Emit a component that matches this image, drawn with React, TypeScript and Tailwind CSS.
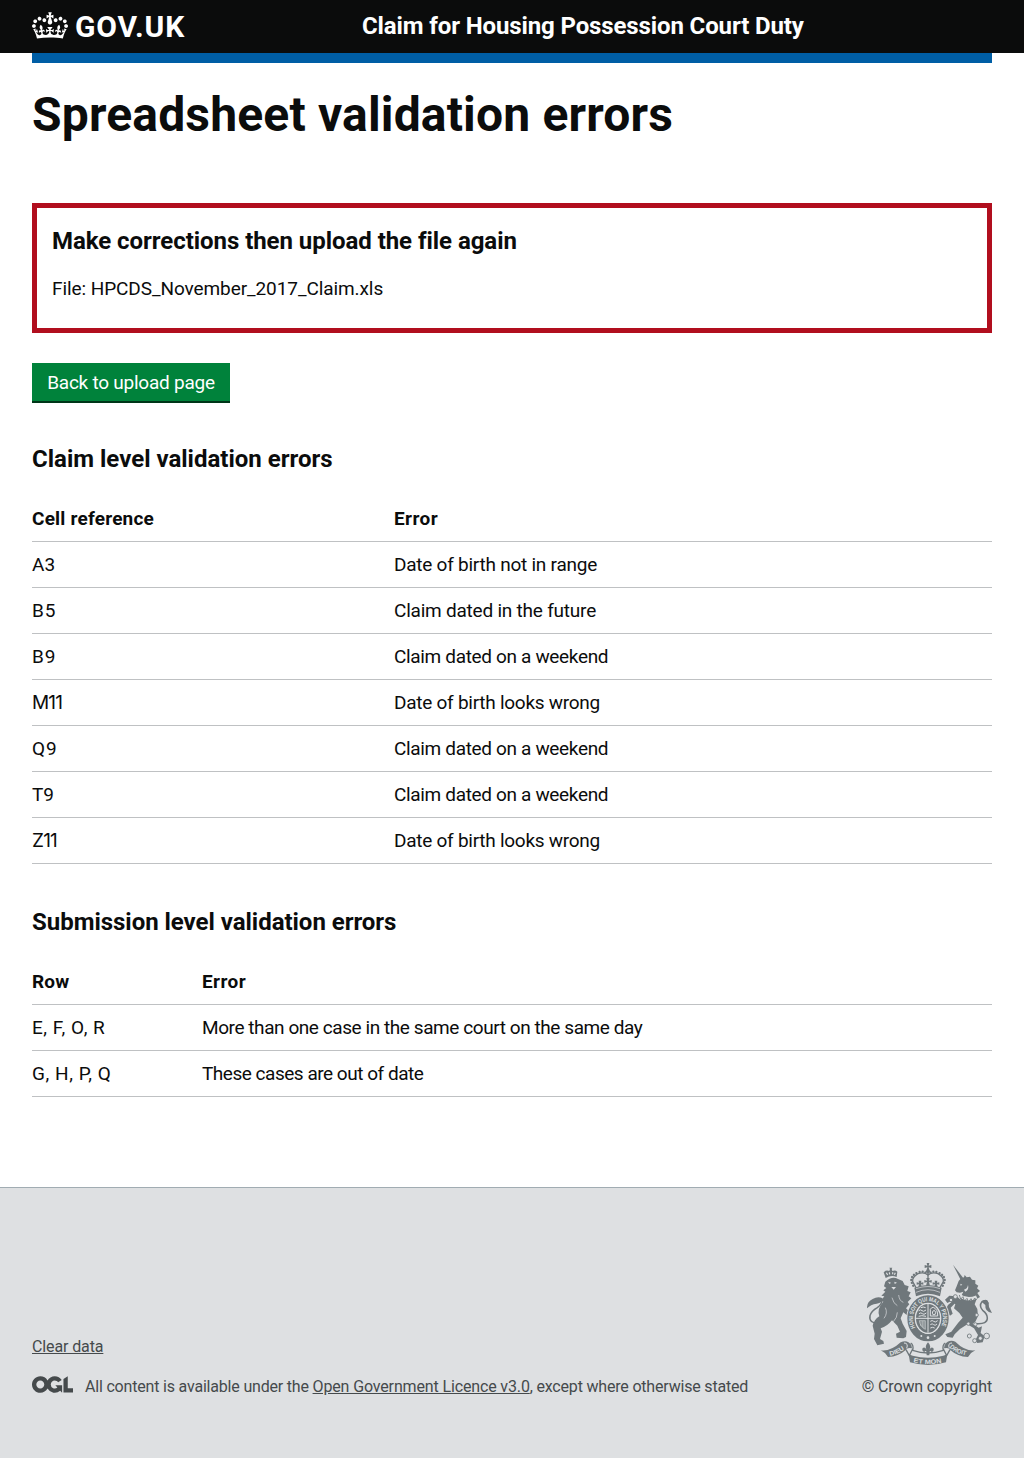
import type { ReactNode } from "react";

type Cell = { text: string; className: string };

const claimErrors: [Cell, Cell][] = [
  [{ text: "A3", className: "" }, { text: "Date of birth not in range", className: "tracking-[-0.24px]" }],
  [{ text: "B5", className: "tracking-[0.8px]" }, { text: "Claim dated in the future", className: "tracking-[-0.22px]" }],
  [{ text: "B9", className: "tracking-[0.8px]" }, { text: "Claim dated on a weekend", className: "tracking-[-0.34px]" }],
  [{ text: "M11", className: "font-[Inter,sans-serif] tracking-[-0.8px]" }, { text: "Date of birth looks wrong", className: "tracking-[-0.26px]" }],
  [{ text: "Q9", className: "tracking-[1px]" }, { text: "Claim dated on a weekend", className: "tracking-[-0.34px]" }],
  [{ text: "T9", className: "" }, { text: "Claim dated on a weekend", className: "tracking-[-0.34px]" }],
  [{ text: "Z11", className: "font-[Inter,sans-serif] tracking-[-0.8px]" }, { text: "Date of birth looks wrong", className: "tracking-[-0.26px]" }],
];

const submissionErrors: [Cell, Cell][] = [
  [{ text: "E, F, O, R", className: "tracking-[0.5px]" }, { text: "More than one case in the same court on the same day", className: "tracking-[-0.43px]" }],
  [{ text: "G, H, P, Q", className: "tracking-[0.55px]" }, { text: "These cases are out of date", className: "tracking-[-0.48px]" }],
];

function CrownLogo() {
  return (
    <svg viewBox="0 0 132 97" className="h-[27px] w-9 shrink-0" fill="currentColor" fillRule="evenodd" aria-hidden="true">
      <path d="M25 30.2c3.5 1.5 7.7-.2 9.1-3.7 1.5-3.6-.2-7.8-3.9-9.2-3.6-1.4-7.6.3-9.1 3.9-1.4 3.5.3 7.5 3.9 9zM9 39.5c3.6 1.5 7.8-.2 9.2-3.7 1.5-3.6-.2-7.8-3.9-9.1-3.6-1.5-7.6.2-9.1 3.8-1.4 3.5.3 7.5 3.8 9zM4.4 57.2c3.5 1.5 7.7-.2 9.1-3.8 1.5-3.6-.2-7.7-3.9-9.1-3.5-1.5-7.6.3-9.1 3.8-1.4 3.5.3 7.6 3.9 9.1zm38.3-21.4c3.5 1.5 7.7-.2 9.1-3.8 1.5-3.6-.2-7.7-3.9-9.1-3.6-1.5-7.6.3-9.1 3.8-1.3 3.6.4 7.7 3.9 9.1zm64.4-5.6c-3.6 1.5-7.8-.2-9.1-3.7-1.5-3.6.2-7.8 3.8-9.2 3.6-1.4 7.7.3 9.2 3.9 1.3 3.5-.4 7.5-3.9 9zm15.9 9.3c-3.6 1.5-7.7-.2-9.1-3.7-1.5-3.6.2-7.8 3.7-9.1 3.6-1.5 7.7.2 9.2 3.8 1.5 3.5-.3 7.5-3.8 9zm4.7 17.7c-3.6 1.5-7.8-.2-9.2-3.8-1.5-3.6.2-7.7 3.9-9.1 3.6-1.5 7.7.3 9.2 3.8 1.3 3.5-.4 7.6-3.9 9.1zM89.3 35.8c-3.6 1.5-7.8-.2-9.2-3.8-1.4-3.6.2-7.7 3.9-9.1 3.6-1.5 7.7.3 9.2 3.8 1.4 3.6-.3 7.7-3.9 9.1zM69.7 17.7l8.9 4.7V9.3l-8.9 2.8c-.2-.3-.5-.6-.9-.9L72.4 0H59.6l3.5 11.2c-.3.3-.6.5-.9.9l-8.8-2.8v13.1l8.8-4.7c.3.3.6.7.9.9l-5 15.4v.1c-.2.8-.4 1.6-.4 2.4 0 4.1 3.1 7.5 7 8.1h.2c.3 0 .7.1 1 .1.4 0 .7 0 1-.1h.2c4-.6 7.1-4.1 7.1-8.1 0-.8-.1-1.7-.4-2.4V34l-5.1-15.4c.4-.2.7-.6 1-.9zM66 92.8c16.9 0 32.8 1.1 47.1 3.2 4-16.9 8.9-26.7 14-33.5l-9.6-3.4c1 4.9 1.1 7.2 0 10.2-1.5-1.4-3-4.3-4.2-8.7L108.6 76c2.8-2 5-3.2 7.5-3.3-4.4 9.4-10 11.9-13.6 11.2-4.3-.8-6.3-4.6-5.6-7.9 1-4.7 5.7-5.9 8-.5 4.3-8.7-3-11.4-7.6-8.8 7.1-7.2 7.9-13.5 2.1-21.1-8 6.1-8.1 12.3-4.5 20.8-4.7-5.4-12.1-2.5-9.5 6.2 3.4-5.2 7.9-2 7.2 3.1-.6 4.3-6.4 7.8-13.5 7.2-10.3-.9-10.9-8-11.2-13.8 2.5-.5 7.1 1.8 11 7.3L80.2 60c-4.1 4.4-8 5.3-12.3 5.4 1.4-4.4 8-11.6 8-11.6H55.5s6.4 7.2 7.9 11.6c-4.2-.1-8-1-12.3-5.4l1.4 16.4c3.9-5.5 8.5-7.7 10.9-7.3-.3 5.8-.9 12.8-11.1 13.8-7.2.6-12.9-2.9-13.5-7.2-.7-5 3.8-8.3 7.1-3.1 2.7-8.7-4.6-11.6-9.4-6.2 3.7-8.5 3.6-14.7-4.6-20.8-5.8 7.6-5 13.9 2.2 21.1-4.7-2.6-11.9.1-7.7 8.8 2.3-5.5 7.1-4.2 8.1.5.7 3.3-1.3 7.1-5.7 7.9-3.5.7-9-1.8-13.5-11.2 2.5.1 4.7 1.3 7.5 3.3l-4.7-15.4c-1.2 4.4-2.7 7.2-4.3 8.7-1.1-3-.9-5.3 0-10.2l-9.5 3.4c5 6.9 9.9 16.7 14 33.5 14.8-2.1 30.8-3.2 47.7-3.2z" />
    </svg>
  );
}

function OglLogo() {
  return (
    <svg viewBox="0 0 483.2 195.7" className="mt-[10px] h-[17px] w-[41px] shrink-0" fill="currentColor" role="img" aria-label="Open Government Licence">
      <path d="M421.5 142.8V.1l-50.7 32.3v161.1h112.4v-50.7zm-122.3-9.6A47.12 47.12 0 0 1 221 97.8c0-26 21.1-47.1 47.1-47.1 16.7 0 31.4 8.7 39.7 21.8l42.7-27.2A97.63 97.63 0 0 0 268.1 0c-36.5 0-68.3 20.1-85.1 49.7A98 98 0 0 0 97.8 0C43.9 0 0 43.9 0 97.8s43.9 97.8 97.8 97.8c36.5 0 68.3-20.1 85.1-49.7a97.76 97.76 0 0 0 149.6 25.4l19.4 22.2h3v-87.8h-80l24.3 27.5zM97.8 145c-26 0-47.1-21.1-47.1-47.1s21.1-47.1 47.1-47.1 47.1 21.1 47.1 47.1S123.8 145 97.8 145" />
    </svg>
  );
}

function RoyalArms() {
  const ink = "#6f777b";
  const paper = "#dee0e2";
  return (
    <svg viewBox="21 21 375 309" className="h-[103px] w-[125px]" fill={ink} fontFamily="'Liberation Sans', sans-serif" fontWeight="700" aria-hidden="true">
      {/* lion */}
      <path d="M76 80 L72 94 L79 99 L70 106 L76 110 L64 122 L73 124 L64 136 L70 140 Q50 160 58 184 Q42 194 38 212 L44 236 L42 252 L52 271 L72 266 L70 258 L60 252 L66 230 L62 220 Q82 214 96 196 L112 212 L120 230 L108 236 L110 248 L130 250 L138 246 L140 228 L128 206 L122 190 L130 172 L140 180 L150 172 L138 160 L148 148 L143 141 L154 130 L146 124 L152 112 L142 108 L146 94 L134 90 L128 78 L114 72 Q96 62 76 80Z" />
      <path d="M56 204 Q26 206 30 182 Q34 168 52 158 Q66 148 66 136" fill="none" stroke={ink} strokeWidth="4.5" />
      <path d="M21 160 Q20 140 38 132 Q54 122 68 130 Q68 144 50 146 Q32 148 21 160Z" />
      <path d="M84 80 l9 3 -4 4z M103 80 l8 3 -7 4z M94 96 l14 0 -7 8z" fill={paper} />
      <path d="M72 190 Q84 174 76 158 M100 200 Q112 188 112 172 M116 120 Q118 138 130 142 M96 128 Q100 146 112 152" fill="none" stroke={paper} strokeWidth="2" />
      {/* lion's crown */}
      <path d="M77 69 L71 52 Q78 44 88 48 L90 42 L88 38 H97 L95 42 L97 48 Q106 44 112 50 L110 66 Q94 58 77 69Z" />
      <path d="M79 53 l4 7 M88 52 l1 6 M98 52 l0 6 M106 53 l-3 6" stroke={paper} strokeWidth="3.5" />
      {/* unicorn */}
      <path d="M279 29 L309 68 L302 75Z" />
      <path d="M296 78 L303 70 L312 67 L314 60 L320 67 L330 65 L336 74 L346 76 L346 86 L355 92 L351 100 L360 108 L352 114 L360 126 L350 132 L344 148 L352 162 L354 184 L346 200 L338 206 L356 218 L366 214 L362 234 L374 244 L368 262 L352 264 L346 256 L354 240 L342 220 L322 208 L300 222 L284 238 L278 248 L262 246 L256 238 L274 230 L294 204 L308 188 L298 174 L282 160 L286 148 L274 138 L262 144 L255 134 L268 122 L290 124 L302 134 L304 122 L310 110 L300 113 L290 112 L285 106 L290 94Z" />
      <path d="M288 142 L272 158 L278 176 L270 182 L256 166 L264 150 L278 138Z" />
      <path d="M301 86 l6 3 -5 3z M312 104 q10 -2 12 -14 q4 14 -8 20z" fill={paper} />
      <path d="M298 122 Q322 138 350 126" fill="none" stroke={paper} strokeWidth="10" />
      <path d="M298 120 l4 12 7 -7 4 13 8 -8 4 11 8 -10 5 9 6 -11 6 6" fill="none" stroke={ink} strokeWidth="2.5" />
      <path d="M350 206 Q382 208 382 190 Q382 176 368 166 Q356 152 366 140 Q376 132 385 146" fill="none" stroke={ink} strokeWidth="4.5" />
      <path d="M366 142 Q372 130 382 136 Q388 144 387 156 L396 174 Q374 170 376 150Z" />
      <g fill={paper} stroke={ink} strokeWidth="2.5">
        <circle cx="286" cy="125" r="6" />
        <circle cx="273" cy="135" r="5" />
        <circle cx="328" cy="243" r="6" />
        <circle cx="344" cy="257" r="6" />
        <circle cx="361" cy="250" r="6" />
        <circle cx="380" cy="243" r="8.5" />
        <circle cx="350" cy="180" r="5" />
        <circle cx="325" cy="206" r="5" />
        <circle cx="346" cy="208" r="5" />
      </g>
      {/* central crown */}
      <path d="M200 24 h8 l-2 8 8 -2 v9 l-8 -2 2 9 h-8 l2 -9 -8 2 v-9 l8 2z" />
      <circle cx="204" cy="49" r="6" />
      <path d="M204 60 Q192 50 174 56 Q156 66 158 80 L168 98 M204 60 Q216 50 234 56 Q252 66 250 80 L240 98 M204 56 V96" fill="none" stroke={ink} strokeWidth="4" />
      <path d="M204 58 Q192 46 174 52 Q152 62 154 78 Q156 88 163 97 M204 58 Q216 46 234 52 Q256 62 254 78 Q252 88 245 97" fill="none" stroke={ink} strokeWidth="7" strokeLinecap="round" strokeDasharray="0.1 9" />
      <path d="M163 98 Q204 82 245 98 L240 124 Q204 108 168 124Z" />
      <path d="M175 96 l2 -8 -7 1 v-7 l7 1 -1 -6 h8 l-1 6 7 -1 v7 l-7 -1 2 8z M198 92 l3 -11 -8 2 v-8 l8 2 -2 -8 h10 l-2 8 8 -2 v8 l-8 -2 3 11z M223 96 l2 -8 -7 1 v-7 l7 1 -1 -6 h8 l-1 6 7 -1 v7 l-7 -1 2 8z" />
      <path d="M168 112 Q204 96 240 112 M168 101 Q204 88 240 101" fill="none" stroke={paper} strokeWidth="2" />
      {/* garter */}
      <ellipse cx="204" cy="190" rx="65" ry="72" fill={paper} />
      <ellipse cx="204" cy="190" rx="51" ry="58" fill="none" stroke={ink} strokeWidth="22" />
      <path id="garter" d="M166 218 A45 52 0 1 1 242 218" fill="none" />
      <text fontSize="18" fill={paper}>
        <textPath href="#garter" textLength="204" lengthAdjust="spacingAndGlyphs">HONI SOIT QUI MAL Y PENSE</textPath>
      </text>
      <circle cx="184" cy="243" r="3" fill={paper} />
      <circle cx="204" cy="248" r="4" fill={paper} />
      <circle cx="224" cy="243" r="3" fill={paper} />
      {/* quartered shield */}
      <g transform="translate(0 3)">
        <ellipse cx="204" cy="187" rx="39" ry="46" fill={paper} />
        <ellipse cx="204" cy="187" rx="36" ry="43" fill={ink} />
        <g stroke={paper} fill="none">
          <path d="M204 144 V230 M168 187 H240" strokeWidth="3" />
          <path d="M176 164 q6 -5 10 0 t12 -2 M177 173 q6 -5 10 0 t12 -2 M183 155 q6 -4 14 0 M176 181 q8 -4 22 0 M211 196 q6 -5 10 0 t12 -2 M211 206 q6 -5 10 0 t10 -2 M211 216 q6 -4 13 0" strokeWidth="3" />
          <path d="M211 180 V160 Q214 154 220 154 Q234 160 233 180Z M219 176 q-5 -10 4 -13 q7 5 2 13z" strokeWidth="3" />
          <path d="M178 194 H196 V220 Q180 212 178 194Z M183 195 V210 M188 195 V214 M192 195 V217" strokeWidth="1.8" />
        </g>
      </g>
      {/* scrolls */}
      <path d="M62 286 Q92 290 122 262 Q142 252 154 270 L156 280 Q142 276 138 284 Q116 304 84 306 Q76 292 62 286Z" />
      <path d="M346 286 Q316 290 286 260 Q266 252 254 270 L252 280 Q266 276 270 284 Q292 304 324 306 Q332 292 346 286Z" />
      <path d="M152 264 Q162 270 158 286 Q204 302 250 286 Q246 270 256 264" fill="none" stroke={ink} strokeWidth="4" />
      <path d="M146 298 L158 302 Q204 314 250 302 L262 298 L258 322 Q204 338 150 322Z" />
      <path d="M138 284 L148 302 L158 282 M270 284 L260 302 L250 282" fill="none" stroke={ink} strokeWidth="4" />
      <path d="M132 264 Q146 264 140 280 M276 264 Q262 264 268 280" fill="none" stroke={paper} strokeWidth="3" />
      <path id="dieu" d="M90 302 Q116 298 138 279" fill="none" />
      <path id="etmon" d="M160 322 Q204 332 248 322" fill="none" />
      <path id="droit" d="M268 277 Q290 298 324 302" fill="none" />
      <g fontSize="19" fill={paper}>
        <text><textPath href="#dieu" textLength="48" lengthAdjust="spacingAndGlyphs">DIEU</textPath></text>
        <text><textPath href="#etmon" textLength="86" lengthAdjust="spacingAndGlyphs">ET MON</textPath></text>
        <text><textPath href="#droit" textLength="56" lengthAdjust="spacingAndGlyphs">DROIT</textPath></text>
      </g>
      {/* fleur-de-lis */}
      <path d="M204 262 Q215 274 208 285 Q212 274 220 279 Q224 288 214 292 Q215 286 209 289 L208 301 H200 L199 289 Q193 286 194 292 Q184 288 188 279 Q196 274 200 285 Q193 274 204 262Z" />
    </svg>
  );
}

function SectionHeading({ children, className }: { children: ReactNode; className: string }) {
  return <h2 className={`text-2xl leading-[30px] font-bold ${className}`}>{children}</h2>;
}

function ErrorTable({ head, rows, columns }: { head: [Cell, Cell]; rows: [Cell, Cell][]; columns: string }) {
  return (
    <div className="mt-[22px] text-[19px] leading-[25px]">
      <div className={`grid h-[46px] border-b border-[#bfc1c3] pt-[10px] font-bold ${columns}`}>
        {head.map((cell) => (
          <span key={cell.text} className={cell.className}>{cell.text}</span>
        ))}
      </div>
      {rows.map(([reference, message]) => (
        <div key={reference.text} className={`grid h-[46px] border-b border-[#bfc1c3] pt-[10px] ${columns}`}>
          <span className={reference.className}>{reference.text}</span>
          <span className={message.className}>{message.text}</span>
        </div>
      ))}
    </div>
  );
}

export default function App() {
  return (
    <div className="flex min-h-[1458px] flex-col bg-white font-[Roboto,sans-serif] text-[#0b0c0c] antialiased">
      <header className="flex h-[53px] items-start bg-[#0b0c0c] px-8 text-white">
        <div className="flex w-[330px] items-start pt-[12px]">
          <CrownLogo />
          <span className="ml-[7px] text-[30px] leading-[30px] font-bold tracking-[0.9px]">GOV.UK</span>
        </div>
        <p className="pt-[11px] text-2xl leading-[30px] font-bold tracking-[-0.12px]">Claim for Housing Possession Court Duty</p>
      </header>

      <main className="px-8">
        <div className="h-[10px] bg-[#005ea5]" />
        <h1 className="mt-[27px] text-5xl leading-[50px] font-bold tracking-[0.17px]">Spreadsheet validation errors</h1>

        <section className="mt-[63px] h-[130px] border-5 border-[#b10e1e] px-[15px] pt-[18px]">
          <SectionHeading className="tracking-[-0.05px]">Make corrections then upload the file again</SectionHeading>
          <p className="mt-5 text-[19px] leading-[25px] tracking-[-0.08px]">File: HPCDS_November_2017_Claim.xls</p>
        </section>

        <button className="mt-[30px] flex h-10 w-[198px] justify-center border-b-2 border-[#003618] bg-[#00823b] pt-[7px] text-[19px] leading-[25px] tracking-[-0.24px] text-white">
          Back to upload page
        </button>

        <SectionHeading className="mt-[41px]">Claim level validation errors</SectionHeading>
        <ErrorTable
          columns="grid-cols-[362px_1fr]"
          head={[{ text: "Cell reference", className: "tracking-[0.2px]" }, { text: "Error", className: "tracking-[0.4px]" }]}
          rows={claimErrors}
        />

        <SectionHeading className="mt-[43px] tracking-[-0.03px]">Submission level validation errors</SectionHeading>
        <ErrorTable
          columns="grid-cols-[170px_1fr]"
          head={[{ text: "Row", className: "tracking-[0.2px]" }, { text: "Error", className: "tracking-[0.4px]" }]}
          rows={submissionErrors}
        />
      </main>

      <footer className="mt-[90px] flex h-[271px] justify-between border-t border-[#a1acb2] bg-[#dee0e2] px-8 text-base leading-5 text-[#454a4c]">
        <div className="pt-[149px]">
          <a href="#" className="tracking-[-0.12px] underline underline-offset-1">Clear data</a>
          <div className="mt-[9px] flex">
            <OglLogo />
            <p className="ml-3 pt-[11px] whitespace-pre">
              <span className="tracking-[-0.19px]">All content is available under the </span>
              <a href="#" className="tracking-[-0.14px] underline underline-offset-1">Open Government Licence v3.0</a>
              <span className="tracking-[-0.19px]">, except where otherwise stated</span>
            </p>
          </div>
        </div>
        <div className="flex flex-col items-end pt-[74px]">
          <RoyalArms />
          <p className="mt-3 tracking-[-0.13px]">© Crown copyright</p>
        </div>
      </footer>
    </div>
  );
}
